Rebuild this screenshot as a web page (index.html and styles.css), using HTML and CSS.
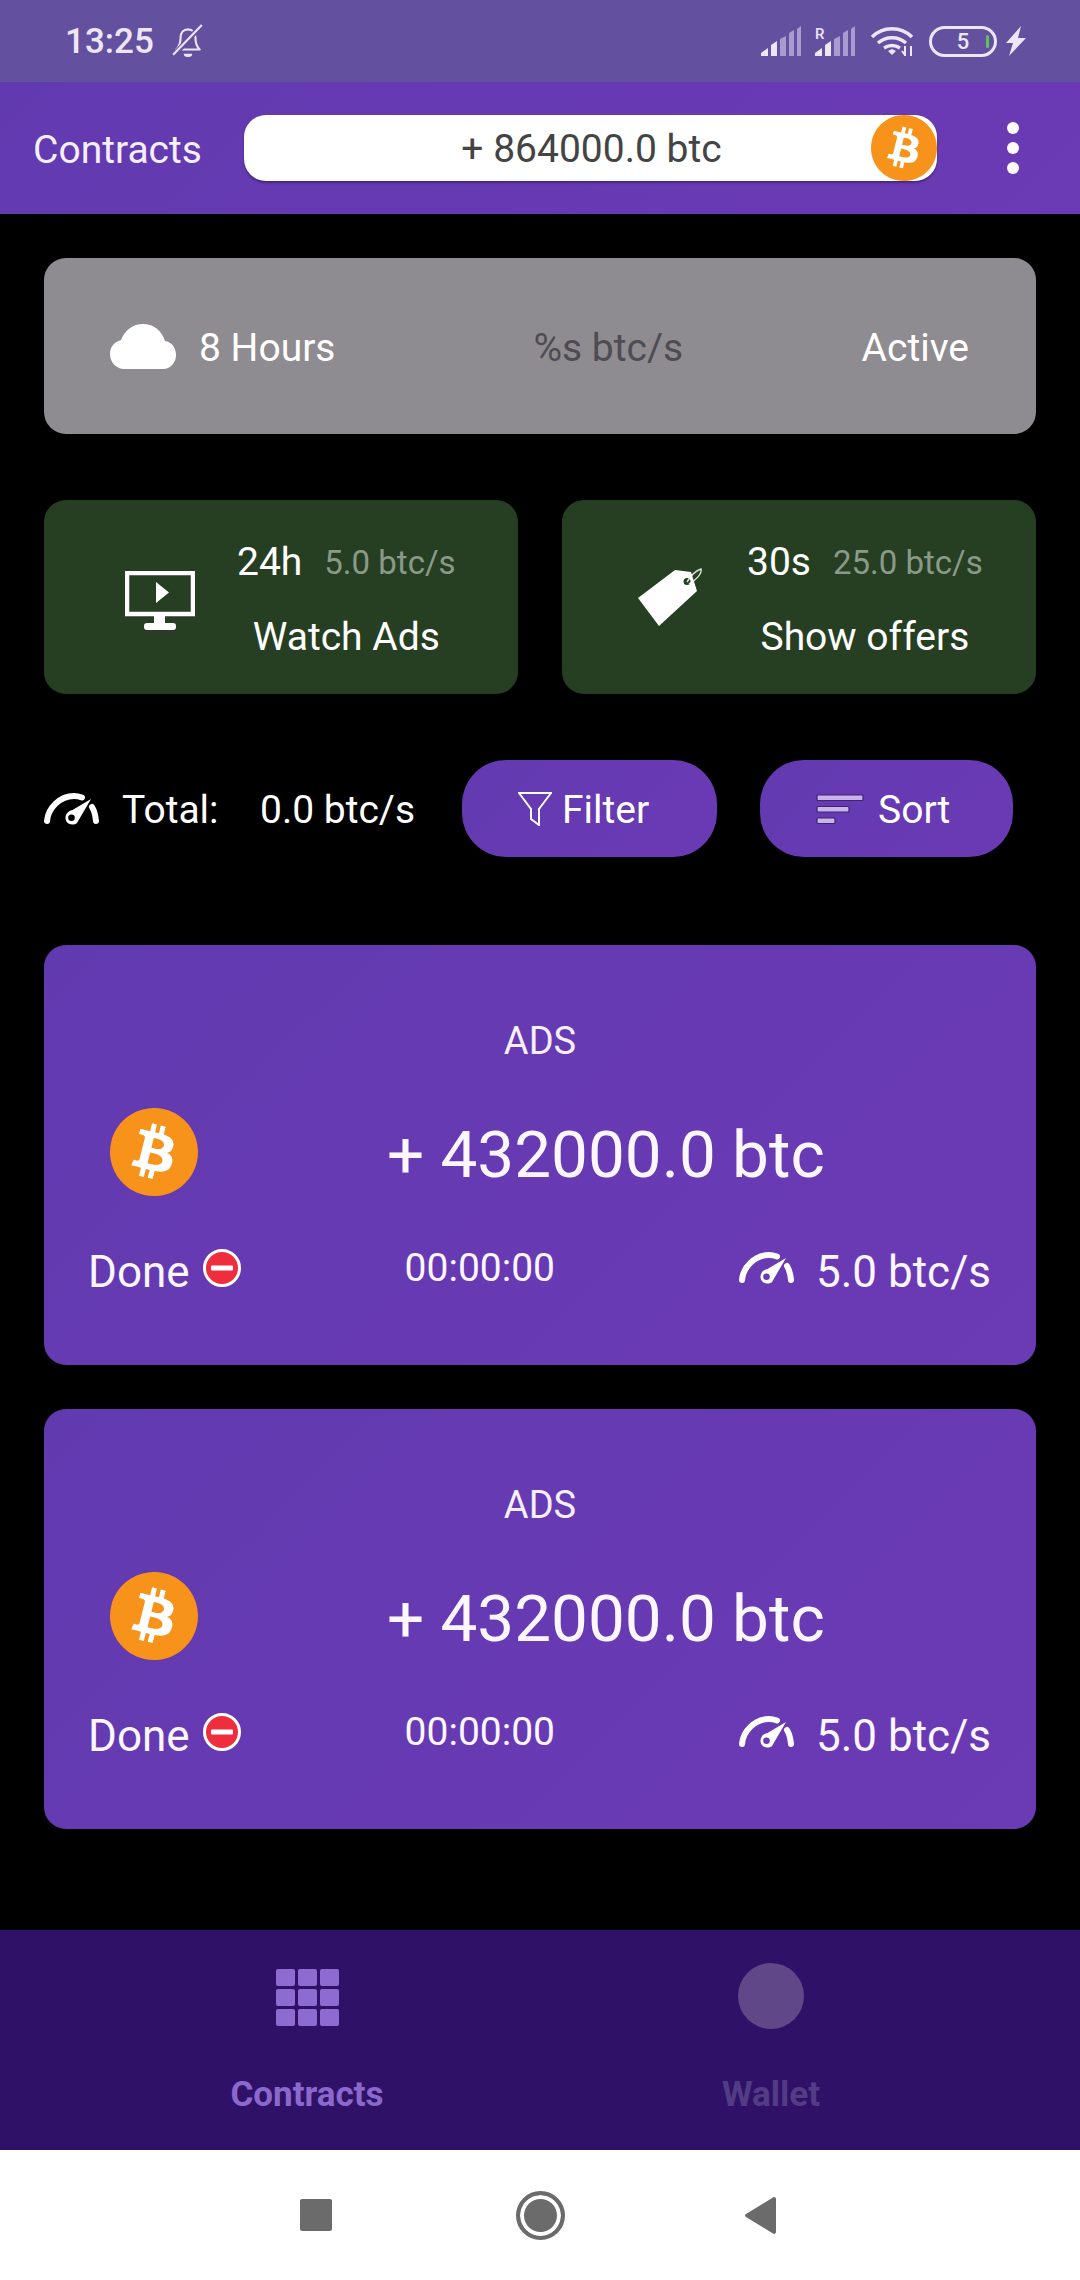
FILE: index.html
```html
<!DOCTYPE html>
<html lang="en">
<head>
<meta charset="utf-8">
<title>Contracts</title>
<link rel="stylesheet" href="styles.css">
</head>
<body>
<svg class="defs" width="0" height="0" aria-hidden="true">
  <symbol id="btc" viewBox="0 0 24 24">
    <circle cx="12" cy="12" r="10" fill="#fff"/>
    <path fill="#f7931a" d="M23.638 14.904c-1.602 6.43-8.113 10.34-14.542 8.736C2.67 22.05-1.244 15.525.362 9.105 1.962 2.67 8.475-1.243 14.9.358c6.43 1.605 10.342 8.115 8.738 14.548v-.002zm-6.35-4.613c.24-1.59-.974-2.45-2.64-3.03l.54-2.153-1.315-.33-.525 2.107c-.345-.087-.705-.167-1.064-.25l.526-2.127-1.32-.33-.54 2.165c-.285-.067-.565-.132-.84-.2l-1.815-.45-.35 1.407s.975.225.955.236c.535.136.63.486.615.766l-1.477 5.92c-.075.166-.24.406-.614.314.015.02-.96-.24-.96-.24l-.66 1.51 1.71.426.93.242-.54 2.19 1.32.327.54-2.17c.36.1.705.19 1.05.273l-.51 2.154 1.32.33.545-2.19c2.24.427 3.93.257 4.64-1.774.57-1.637-.03-2.58-1.217-3.196.854-.193 1.5-.76 1.68-1.93h.01zm-3.01 4.22c-.404 1.64-3.157.75-4.05.53l.72-2.9c.896.23 3.757.67 3.33 2.37zm.41-4.24c-.37 1.49-2.662.735-3.405.55l.654-2.64c.744.18 3.137.524 2.75 2.084v.006z"/>
  </symbol>
  <symbol id="gauge" viewBox="0 0 55 32">
    <path d="M3 28C4 15 16 3 30 3c3 0 5 .4 8 1.500M48 14c2.500 4 3.500 9 4 14" fill="none" stroke="#fff" stroke-width="6" stroke-linecap="round"/>
    <path fill="#fff" fill-rule="evenodd" d="M47 6 33 30c-2.500 2-6 2-8.500.5-3-2-4-6-2-9.500 1.500-2.500 3.500-3.500 6-4zM27.500 21.500a3.300 3.300 0 1 0 0 6.600 3.300 3.300 0 0 0 0-6.600z"/>
  </symbol>
  <symbol id="minus" viewBox="0 0 38 38">
    <circle cx="19" cy="19" r="17.500" fill="#ee2e3c" stroke="#fff" stroke-width="3"/>
    <rect x="8" y="16.500" width="22" height="5" rx="1" fill="#fff"/>
  </symbol>
</svg>
<div class="app">
  <div class="status">
    <span class="clock">13:25</span>
    <svg class="bell" viewBox="0 0 32 32"><path d="M5 24c3-3 4-6 4-11 0-5 3-8 7-8s7 3 7 8c0 5 1 8 4 11z" fill="none" stroke="#eee6f6" stroke-width="2" stroke-linejoin="round"/><path d="M12 28h8a4 3 0 0 1-8 0z" fill="#eee6f6"/><path d="M2 30 29 1" stroke="#63519f" stroke-width="5"/><path d="M2 29 29 1" stroke="#eee6f6" stroke-width="2"/></svg>
    <div class="status-right">
      <svg class="signal" viewBox="0 0 40 30"><path fill="#eee6f6" d="M0 30v-3l7-5v8zM10 30V19l6-4v15z"/><path fill="#a99bd0" d="M19 30V13l6-3v20zM28 30V7l5-3v26zM36 30V3l4-3v30z"/></svg>
      <svg class="signal" viewBox="0 0 40 30"><text x="0" y="13" class="roam">R</text><path fill="#eee6f6" d="M0 30v-3l7-5v8zM10 30V19l6-4v15z"/><path fill="#a99bd0" d="M19 30V13l6-3v20zM28 30V7l5-3v26zM36 30V3l4-3v30z"/></svg>
      <svg class="wifi" viewBox="0 0 44 30"><path d="M2 11C13 0 31 0 42 11M8 17c8-7 20-7 28 0M14 22c5-3 11-3 16 0" fill="none" stroke="#eee6f6" stroke-width="3.500"/><path d="m18 25 4-2 4 2-4 4z" fill="#eee6f6"/><path d="M35 20v10M41 20v10M32 25l3 4M44 24" stroke="#eee6f6" stroke-width="2"/></svg>
      <div class="battery"><span>5</span><i class="charge"></i></div>
      <svg class="bolt" viewBox="0 0 20 30"><path fill="#eee6f6" d="M15 0 0 17h7L3 30l17-18h-8z"/></svg>
    </div>
  </div>
  <header class="topbar">
    <span class="top-title">Contracts</span>
    <div class="balance">
      <span class="balance-text">+ 864000.0 btc</span>
      <svg class="balance-coin"><use href="#btc"/></svg>
    </div>
    <div class="more"><i></i><i></i><i></i></div>
  </header>
  <main class="content">
    <section class="status-card">
      <svg class="cloud" viewBox="0 0 66 45"><path fill="#fff" d="M14 45C6 45 0 38 0 30c0-7 4-12 11-14C15 6 23 0 33 0c11 0 19 7 22 17 7 1 11 7 11 14 0 8-6 14-13 14z"/></svg>
      <span class="hours">8 Hours</span>
      <span class="rate-muted">%s btc/s</span>
      <span class="active">Active</span>
    </section>
    <section class="offers">
      <div class="offer offer-ads">
        <svg class="monitor" viewBox="0 0 70 59"><rect x="2" y="2" width="66" height="41" fill="none" stroke="#fff" stroke-width="4.500"/><path fill="#fff" d="M31 11l13 10.500L31 32zM29 43h11v10H29z"/><rect x="19" y="52" width="32" height="7" rx="3" fill="#fff"/></svg>
        <div class="offer-text">
          <div class="offer-line"><span class="offer-time">24h</span><span class="offer-rate">5.0 btc/s</span></div>
          <div class="offer-name">Watch Ads</div>
        </div>
      </div>
      <div class="offer offer-tag">
        <svg class="tag" viewBox="0 0 65 59"><path fill="none" stroke="#d8dfd6" stroke-width="1.500" d="M49 14c3-5 8-11 14-13 1 5-5 11-12 15"/><path fill="#fff" fill-rule="evenodd" d="M0 30 37 2l16 2 6 19-38 35zM49 10a3.500 3.500 0 1 0 0 7 3.500 3.500 0 0 0 0-7z"/></svg>
        <div class="offer-text">
          <div class="offer-line"><span class="offer-time">30s</span><span class="offer-rate">25.0 btc/s</span></div>
          <div class="offer-name">Show offers</div>
        </div>
      </div>
    </section>
    <section class="toolbar">
      <svg class="gauge-total"><use href="#gauge"/></svg>
      <span class="total-label">Total:</span>
      <span class="total-value">0.0 btc/s</span>
      <div class="pill-btn pill-filter">
        <svg class="filter-icon" viewBox="0 0 34 34"><path d="M1 1h32L21 17v16l-8-6V17z" fill="none" stroke="#fff" stroke-width="2"/></svg>
        <span class="pill-label">Filter</span>
      </div>
      <div class="pill-btn pill-sort">
        <svg class="sort-icon" viewBox="0 0 48 30"><g fill="#c9b3e8" stroke="#3e2470" stroke-width="1.200"><rect x="1" y="1" width="46" height="5.500" rx="1"/><rect x="1" y="12.500" width="32" height="5.500" rx="1"/><rect x="1" y="24" width="18" height="5.500" rx="1"/></g></svg>
        <span class="pill-label">Sort</span>
      </div>
    </section>
    <section class="contract">
      <div class="contract-title">ADS</div>
      <div class="contract-main">
        <svg class="contract-coin"><use href="#btc"/></svg>
        <span class="contract-amount">+ 432000.0 btc</span>
      </div>
      <div class="contract-foot">
        <span class="done">Done</span>
        <svg class="minus"><use href="#minus"/></svg>
        <span class="timer">00:00:00</span>
        <svg class="gauge-rate"><use href="#gauge"/></svg>
        <span class="rate">5.0 btc/s</span>
      </div>
    </section>
    <section class="contract">
      <div class="contract-title">ADS</div>
      <div class="contract-main">
        <svg class="contract-coin"><use href="#btc"/></svg>
        <span class="contract-amount">+ 432000.0 btc</span>
      </div>
      <div class="contract-foot">
        <span class="done">Done</span>
        <svg class="minus"><use href="#minus"/></svg>
        <span class="timer">00:00:00</span>
        <svg class="gauge-rate"><use href="#gauge"/></svg>
        <span class="rate">5.0 btc/s</span>
      </div>
    </section>
  </main>
  <nav class="tabs">
    <div class="tab tab-on">
      <div class="tab-icon">
        <div class="grid-icon"><i></i><i></i><i></i><i></i><i></i><i></i><i></i><i></i><i></i></div>
      </div>
      <span class="tab-label">Contracts</span>
    </div>
    <div class="tab tab-off">
      <div class="tab-icon"><div class="wallet-dot"></div></div>
      <span class="tab-label">Wallet</span>
    </div>
  </nav>
  <div class="sysnav">
    <div class="sys-square"></div>
    <div class="sys-home"></div>
    <svg class="sys-back" viewBox="0 0 31 37"><path fill="#6b6b6b" d="M28 .500c1.500-1 3 0 3 1.500v33c0 1.500-1.500 2.500-3 1.500L1 20c-1.300-1-1.300-2 0-3z"/></svg>
  </div>
</div>
</body>
</html>
```
FILE: styles.css
```css
* { box-sizing: border-box; }
html, body { margin: 0; padding: 0; background: #000; }
body { font-family: Roboto, "Noto Sans", sans-serif; color: #fff; white-space: nowrap; }
.defs { position: absolute; }
svg { display: block; flex: none; }
.app { width: 1080px; height: 2280px; display: flex; flex-direction: column; overflow: hidden; }

/* status bar */
.status { height: 82px; flex: none; background: #63519f; display: flex; align-items: center; padding: 0 54px 0 65px; color: #eee6f6; }
.clock { font-size: 35px; font-weight: 500; width: 90px; }
.bell { width: 34px; height: 34px; margin-left: 16px; }
.status-right { margin-left: auto; display: flex; align-items: center; }
.signal { width: 40px; height: 30px; margin-right: 14px; }
.roam { font: 500 15px Roboto, sans-serif; fill: #eee6f6; }
.wifi { width: 44px; height: 30px; margin-left: 1px; }
.battery { width: 68px; height: 31px; margin-left: 15px; border: 3px solid #eee6f6; border-radius: 16px; display: flex; align-items: center; justify-content: center; font-size: 22px; font-weight: 500; position: relative; }
.charge { position: absolute; right: 5px; top: 6px; width: 3px; height: 13px; background: #5fc35a; border-radius: 2px; }
.bolt { width: 20px; height: 30px; margin-left: 9px; }

/* top bar */
.topbar { height: 132px; flex: none; background: linear-gradient(135deg, #623ab0, #6b3ab5); display: flex; align-items: center; padding-left: 33px; }
.top-title { font-size: 39px; width: 167px; color: #f5eefb; padding-top: 3px; }
.balance { margin-left: 44px; width: 693px; height: 66px; background: #fff; border-radius: 22px; color: #444; font-size: 39px; display: flex; align-items: center; justify-content: center; position: relative; box-shadow: 0 2px 2px rgba(40, 20, 80, .5); }
.balance-text { padding-top: 2px; padding-left: 2px; }
.balance-coin { position: absolute; right: 0; top: 0; width: 66px; height: 66px; }
.more { margin-left: 70px; display: flex; flex-direction: column; gap: 8px; }
.more i { width: 12px; height: 12px; border-radius: 50%; background: #fff; }

/* content */
.content { flex: 1; background: #000; padding: 44px 44px 0; }
.status-card { height: 176px; background: #8e8c90; border-radius: 22px; display: flex; align-items: center; padding: 0 67px 0 66px; font-size: 39px; }
.cloud { width: 66px; height: 45px; }
.hours { margin-left: 23px; padding-top: 3px; }
.rate-muted { margin-left: 198px; color: #4e4c52; padding-top: 3px; }
.active { margin-left: auto; padding-top: 3px; }

.offers { margin-top: 66px; display: flex; gap: 44px; }
.offer { flex: none; width: 474px; height: 194px; background: #263f23; border-radius: 22px; display: flex; align-items: center; }
.offer-ads { padding-left: 81px; }
.offer-tag { padding-left: 76px; }
.monitor { width: 70px; height: 59px; margin-right: 42px; margin-top: 7px; }
.tag { width: 65px; height: 59px; margin-right: 44px; }
.offer-text { display: flex; flex-direction: column; align-items: center; gap: 25px; margin-top: 5px; }
.offer-line { display: flex; align-items: center; height: 50px; gap: 22px; }
.offer-time { font-size: 39px; }
.offer-rate { font-size: 33px; color: #8a9a88; }
.offer-name { font-size: 39px; line-height: 50px; height: 50px; }

.toolbar { margin-top: 66px; height: 97px; display: flex; align-items: center; font-size: 39px; }
.gauge-total { width: 55px; height: 32px; }
.total-label { margin-left: 23px; width: 93px; padding-top: 3px; }
.total-value { margin-left: 45px; width: 154px; padding-top: 3px; }
.pill-btn { height: 97px; background: linear-gradient(135deg, #623ab0, #6b3ab5); border-radius: 44px; display: flex; align-items: center; font-size: 39px; }
.pill-label { padding-top: 2px; }
.pill-filter { width: 255px; margin-left: 48px; padding-left: 56px; gap: 10px; }
.filter-icon { width: 34px; height: 34px; }
.pill-sort { width: 253px; margin-left: 43px; padding-left: 56px; gap: 14px; }
.sort-icon { width: 48px; height: 30px; }

.contract { margin-top: 44px; height: 420px; background: linear-gradient(135deg, #623ab0, #6b3ab5); border-radius: 22px; padding-top: 67px; }
.toolbar + .contract { margin-top: 88px; }
.contract-title { height: 54px; line-height: 54px; padding-top: 2px; text-align: center; font-size: 38px; color: #f5eefb; }
.contract-main { margin-top: 42px; display: flex; align-items: center; padding-left: 66px; }
.contract-coin { width: 88px; height: 88px; }
.contract-amount { margin-left: 189px; font-size: 65.6px; color: #fbf6ff; padding-top: 5px; }
.contract-foot { margin-top: 42px; height: 60px; display: flex; align-items: center; padding: 0 45px 0 44px; font-size: 44px; color: #fbf6ff; }
.done { padding-top: 7px; }
.minus { width: 38px; height: 38px; margin-left: 13px; }
.timer { margin-left: 164px; font-size: 39px; }
.gauge-rate { width: 55px; height: 32px; margin-left: auto; margin-top: -1px; }
.rate { margin-left: 22px; padding-top: 7px; }

/* tabs */
.tabs { height: 220px; flex: none; background: #2f1268; display: flex; padding: 33px 77px 0 75px; font-weight: 700; font-size: 35px; }
.tab { flex: 1; display: flex; flex-direction: column; align-items: center; }
.tab-label { margin-top: 46px; line-height: 40px; }
.tab-on { color: #8a68cc; }
.tab-off { color: #533c85; }
.tab-icon { height: 66px; display: flex; align-items: center; }
.grid-icon { width: 63px; height: 57px; margin-top: 3px; display: grid; grid-template-columns: repeat(3, 1fr); grid-template-rows: repeat(3, 1fr); gap: 3px; }
.grid-icon i { background: #8d6bd1; border-radius: 2px; }
.wallet-dot { width: 66px; height: 66px; border-radius: 50%; background: #5f4788; }

/* system navigation */
.sysnav { height: 130px; flex: none; background: #fff; display: flex; align-items: center; padding-left: 300px; }
.sys-square { width: 32px; height: 32px; background: #6b6b6b; border-radius: 2px; }
.sys-home { width: 49px; height: 49px; margin-left: 184px; border-radius: 50%; background: #6b6b6b; border: 4px solid #6b6b6b; box-shadow: inset 0 0 0 4px #fff; }
.sys-back { width: 31px; height: 37px; margin-left: 180px; }
```
